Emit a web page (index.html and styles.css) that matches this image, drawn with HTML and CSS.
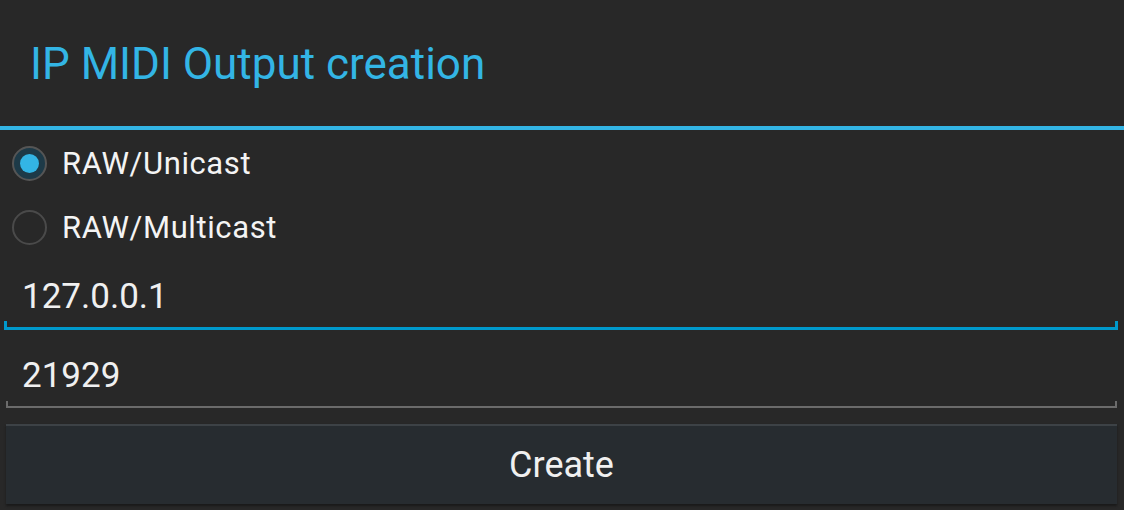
FILE: index.html
```html
<!DOCTYPE html>
<html>
<head>
<meta charset="utf-8">
<link rel="stylesheet" href="styles.css">
</head>
<body>
<div class="dialog">
  <div class="title">IP MIDI Output creation</div>
  <div class="divider"></div>
  <div class="radios">
    <div class="radio-row">
      <span class="radio checked"><span class="dot"></span></span>
      <span class="label">RAW/Unicast</span>
    </div>
    <div class="radio-row">
      <span class="radio"></span>
      <span class="label">RAW/Multicast</span>
    </div>
  </div>
  <div class="field field-focused">
    <div class="field-text">127.0.0.1</div>
    <div class="underline"></div>
  </div>
  <div class="field field-plain">
    <div class="field-text">21929</div>
    <div class="underline"></div>
  </div>
  <div class="button-wrap">
    <div class="button">Create</div>
  </div>
</div>
</body>
</html>
```
FILE: styles.css
```css
html, body {
  margin: 0;
  padding: 0;
  background: #282828;
}
body {
  width: 1124px;
  height: 510px;
  overflow: hidden;
  font-family: Roboto, "Noto Sans", sans-serif;
  color: #f2f2f2;
}
.dialog {
  display: flex;
  flex-direction: column;
}
.title {
  height: 126px;
  display: flex;
  align-items: center;
  padding-left: 30px;
  font-size: 44px;
  color: #33b5e5;
  box-sizing: border-box;
  padding-top: 2px;
}
.divider {
  height: 4px;
  background: #33b5e5;
}
.radios {
  display: flex;
  flex-direction: column;
  padding-top: 1px;
}
.radio-row {
  height: 64px;
  display: flex;
  align-items: center;
}
.radio {
  width: 31px;
  height: 31px;
  margin-left: 12px;
  border: 2px solid #4a4a4a;
  border-radius: 50%;
  display: flex;
  align-items: center;
  justify-content: center;
  flex: none;
}
.radio.checked {
  background: #1d3a48;
  border-color: #555;
}
.dot {
  width: 19px;
  height: 19px;
  border-radius: 50%;
  background: #33b5e5;
}
.label {
  margin-left: 15px;
  font-size: 31px;
  letter-spacing: 0.6px;
  color: #f4f4f4;
}
.field {
  display: flex;
  flex-direction: column;
}
.field-text {
  font-size: 35px;
  padding-left: 22px;
  color: #f0f0f0;
}
.field-focused .field-text {
  padding-top: 18px;
  line-height: 40px;
}
.field-focused .underline {
  margin-left: 4px;
  width: 1108px;
  height: 6px;
  margin-top: 4px;
  border: 3px solid #0099cc;
  border-top: none;
}
.field-plain .field-text {
  padding-top: 26px;
  line-height: 40px;
}
.field-plain .underline {
  margin-left: 6px;
  width: 1107px;
  height: 5px;
  margin-top: 5px;
  border: 2px solid #6b6b6b;
  border-top: none;
}
.button-wrap {
  padding: 16px 7px 0 6px;
}
.button {
  height: 78px;
  background: #272c30;
  border-top: 2px solid #3d4246;
  box-shadow: 0 2px 2px #1a1a1a;
  display: flex;
  align-items: center;
  justify-content: center;
  font-size: 36px;
  color: #f0f0f0;
}
```
